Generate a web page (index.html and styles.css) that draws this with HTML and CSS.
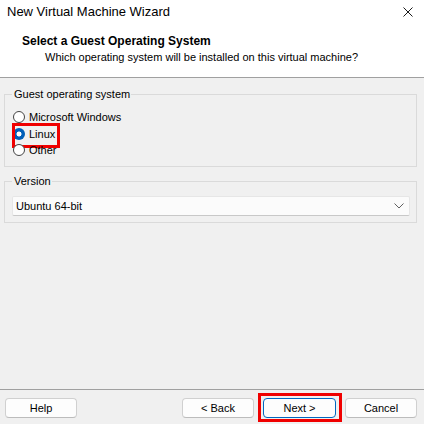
FILE: index.html
```html
<!DOCTYPE html>
<html>
<head>
<meta charset="utf-8">
<link rel="stylesheet" href="styles.css">
</head>
<body>
<div class="window">
  <div class="titlebar">
    <span class="title">New Virtual Machine Wizard</span>
    <svg class="close" width="10" height="10" viewBox="0 0 10 10"><path d="M0.5 0.5 L9.5 9.5 M9.5 0.5 L0.5 9.5" stroke="#1a1a1a" stroke-width="1"/></svg>
  </div>
  <div class="header">
    <div class="heading">Select a Guest Operating System</div>
    <div class="subheading">Which operating system will be installed on this virtual machine?</div>
  </div>
  <div class="content">
    <fieldset class="group group-os">
      <legend>Guest operating system</legend>
      <div class="radio-row"><span class="radio"></span><span>Microsoft Windows</span></div>
      <div class="radio-row highlight-wrap"><span class="radio checked"></span><span>Linux</span><span class="highlight hl-linux"></span></div>
      <div class="radio-row"><span class="radio"></span><span>Other</span></div>
    </fieldset>
    <fieldset class="group group-version">
      <legend>Version</legend>
      <div class="select">
        <span>Ubuntu 64-bit</span>
        <svg class="chev" width="10" height="6" viewBox="0 0 10 6"><path d="M0.5 0.5 L5 5 L9.5 0.5" fill="none" stroke="#606060" stroke-width="1"/></svg>
      </div>
    </fieldset>
  </div>
  <div class="footer">
    <button class="btn">Help</button>
    <div class="spacer"></div>
    <button class="btn">&lt; Back</button>
    <div class="highlight-wrap btn-wrap"><button class="btn primary">Next &gt;</button><span class="highlight hl-next"></span></div>
    <button class="btn">Cancel</button>
  </div>
</div>
</body>
</html>
```
FILE: styles.css
```css
* { box-sizing: border-box; }
body {
  margin: 0;
  background: #f0f0f0;
  font-family: "Liberation Sans", Arial, sans-serif;
  font-size: 11px;
  color: #000;
}
.window {
  width: 424px;
  height: 424px;
  display: flex;
  flex-direction: column;
  background: #f0f0f0;
}
.titlebar {
  height: 23px;
  background: #fff;
  display: flex;
  align-items: center;
  justify-content: space-between;
  padding: 0 11px 0 7px;
}
.title { font-size: 13px; }
.close { display: block; }
.header {
  background: #fff;
  height: 55px;
  border-bottom: 1px solid #a0a0a0;
  padding: 10px 0 0 22px;
}
.heading { font-weight: bold; font-size: 12px; line-height: 16px; }
.subheading { line-height: 16px; padding-left: 23px; }
.content {
  flex: 1;
  padding: 8px 7px 0 4px;
  display: flex;
  flex-direction: column;
  gap: 6px;
}
.group {
  margin: 0;
  border: 1px solid #dadada;
  padding: 0 7px 0 7px;
}
.group legend {
  padding: 0 1px 0 2px;
  line-height: 16px;
}
.group-os { height: 81px; padding-top: 7px; }
.radio-row {
  display: flex;
  align-items: center;
  height: 16.5px;
  gap: 4px;
  position: relative;
}
.radio {
  width: 12px;
  height: 12px;
  border-radius: 50%;
  border: 1px solid #444;
  background: #fff;
  margin-left: 1px;
}
.radio.checked {
  border: none;
  background: radial-gradient(circle, #fff 0 2.2px, #005fb8 2.8px);
}
.highlight-wrap { position: relative; }
.highlight {
  position: absolute;
  border: 3px solid #f00000;
  pointer-events: none;
}
.hl-linux { left: 0; top: -3px; width: 48px; height: 25px; }
.group-version { height: 50px; padding-top: 7px; padding-right: 6px; }
.select {
  height: 20px;
  background: #fbfbfb;
  border: 1px solid #e6e6e6;
  border-bottom-color: #c8c8c8;
  border-radius: 2px;
  display: flex;
  align-items: center;
  justify-content: space-between;
  padding: 0 5px 0 3px;
}
.chev { display: block; }
.footer {
  height: 35px;
  border-top: 1px solid #a0a0a0;
  display: flex;
  align-items: flex-start;
  padding: 8px 7px 0 5px;
  gap: 9px;
}
.spacer { flex: 1; }
.btn {
  width: 72px;
  height: 20px;
  font: inherit;
  color: #000;
  background: #fdfdfd;
  border: 1px solid #d0d0d0;
  border-bottom-color: #bcbcbc;
  border-radius: 4px;
  padding: 0;
}
.btn.primary { border: 1px solid #0067c0; width: 73px; }
.btn-wrap { display: flex; }
.hl-next { left: -5px; top: -5px; width: 84px; height: 29px; }
```
